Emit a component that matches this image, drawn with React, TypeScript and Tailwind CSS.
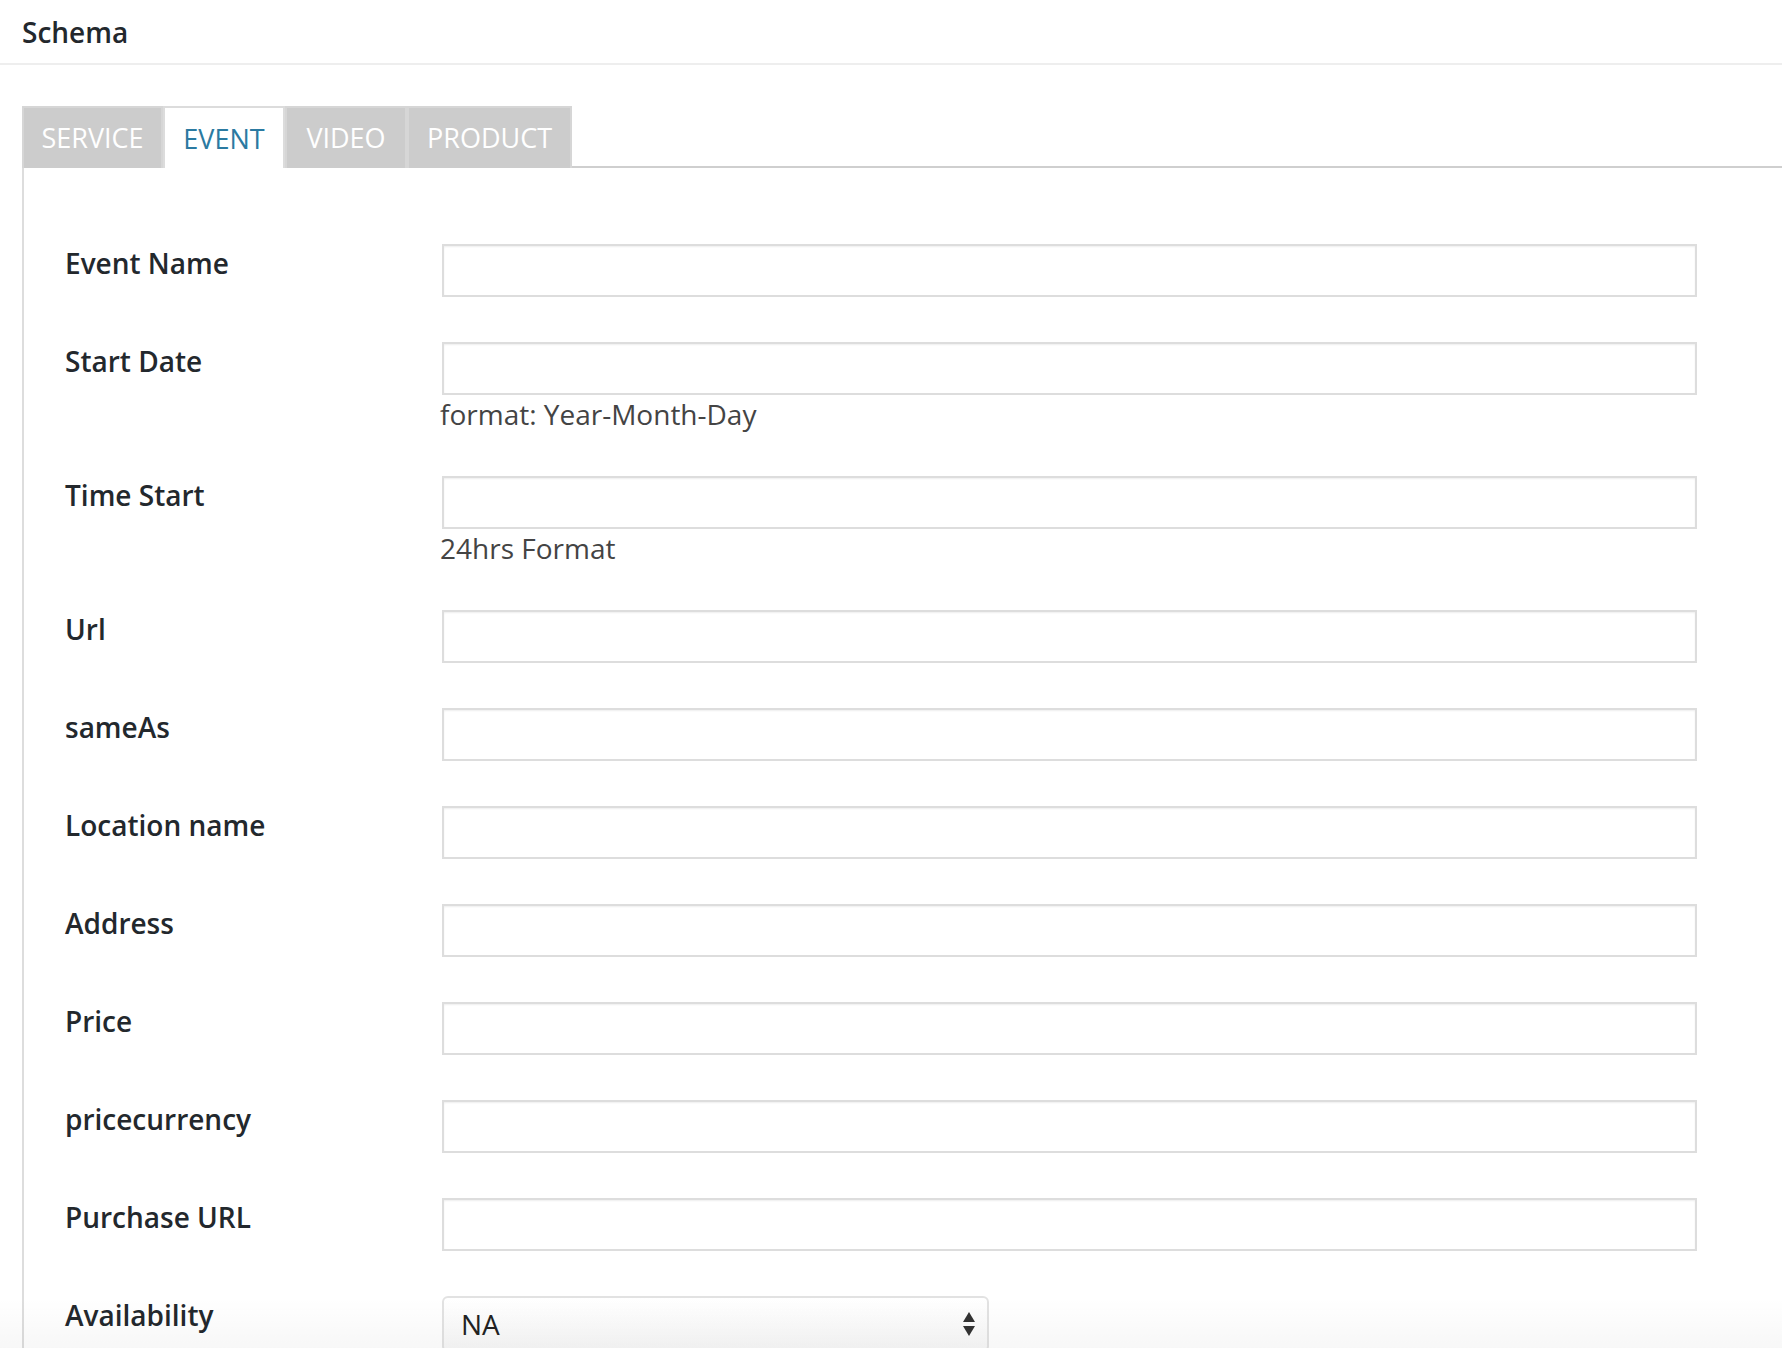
import React from "react";

type Field = {
    label: string;
    help?: string;
};

const fields: Field[] = [
    { label: "Event Name" },
    { label: "Start Date", help: "format: Year-Month-Day" },
    { label: "Time Start", help: "24hrs Format" },
    { label: "Url" },
    { label: "sameAs" },
    { label: "Location name" },
    { label: "Address" },
    { label: "Price" },
    { label: "pricecurrency" },
    { label: "Purchase URL" },
];

const tabs = [
    { name: "SERVICE", width: "w-[141px]" },
    { name: "EVENT", width: "w-[122px]" },
    { name: "VIDEO", width: "w-[122px]" },
    { name: "PRODUCT", width: "w-[165px]" },
];

const SelectArrows = () => (
    <svg width="14" height="26" viewBox="0 0 14 26" className="shrink-0">
        <polygon points="7,1 13,11 1,11" fill="#333" />
        <polygon points="1,15 13,15 7,25" fill="#333" />
    </svg>
);

const App = () => {
    const active = "EVENT";

    return (
        <div className="relative h-[1348px] overflow-hidden bg-white font-['Open_Sans',sans-serif] text-[#23282d]">
            {/* header */}
            <div className="flex h-[65px] items-center border-b-2 border-[#eee] pl-[22px]">
                <h2 className="text-[28px] font-semibold leading-none">
                    Schema
                </h2>
            </div>

            {/* tabs */}
            <div className="mt-[41px] flex h-[62px] pl-[22px]">
                {tabs.map((tab) =>
                    tab.name === active ? (
                        <div
                            key={tab.name}
                            className={`${tab.width} flex items-center justify-center border-2 border-b-0 border-[#dcdcdc] bg-white pt-[2px] text-[27px] font-medium text-[#2b7aa1]`}
                        >
                            {tab.name}
                        </div>
                    ) : (
                        <div
                            key={tab.name}
                            className={`${tab.width} flex items-center justify-center border-2 border-b-0 border-[#d6d6d6] bg-[#cccccc] text-[27px] font-medium text-white`}
                        >
                            {tab.name}
                        </div>
                    )
                )}
                <div className="flex-1 border-b-2 border-[#cfcfcf]" />
            </div>

            {/* panel */}
            <div className="ml-[22px] h-full border-l-2 border-[#dddddd] pl-[41px] pt-[76px]">
                {fields.map((field) => (
                    <div key={field.label} className="mb-[45px] flex">
                        <label className="w-[377px] shrink-0 text-[28px] font-semibold leading-[38px]">
                            {field.label}
                        </label>
                        <div className="flex flex-col">
                            <input
                                type="text"
                                className="h-[53px] w-[1255px] border-2 border-[#dddddd] bg-white shadow-[inset_0_1px_2px_rgba(0,0,0,0.07)] outline-none"
                            />
                            {field.help ? (
                                <p className="-ml-[2px] mt-[3px] text-[28px] leading-[33px] text-[#444]">
                                    {field.help}
                                </p>
                            ) : null}
                        </div>
                    </div>
                ))}

                <div className="flex">
                    <label className="w-[377px] shrink-0 text-[28px] font-semibold leading-[38px]">
                        Availability
                    </label>
                    <div className="flex h-[56px] w-[547px] items-center justify-between rounded-[6px] border-2 border-[#e2e2e2] bg-gradient-to-b from-white to-[#f7f7f7] pl-[17px] pr-[11px]">
                        <span className="text-[28px] text-[#222]">NA</span>
                        <SelectArrows />
                    </div>
                </div>
            </div>

            {/* soft bottom fade */}
            <div className="pointer-events-none absolute inset-x-0 bottom-0 h-[50px] bg-gradient-to-b from-transparent to-black/[0.03]" />
        </div>
    );
};

export default App;
